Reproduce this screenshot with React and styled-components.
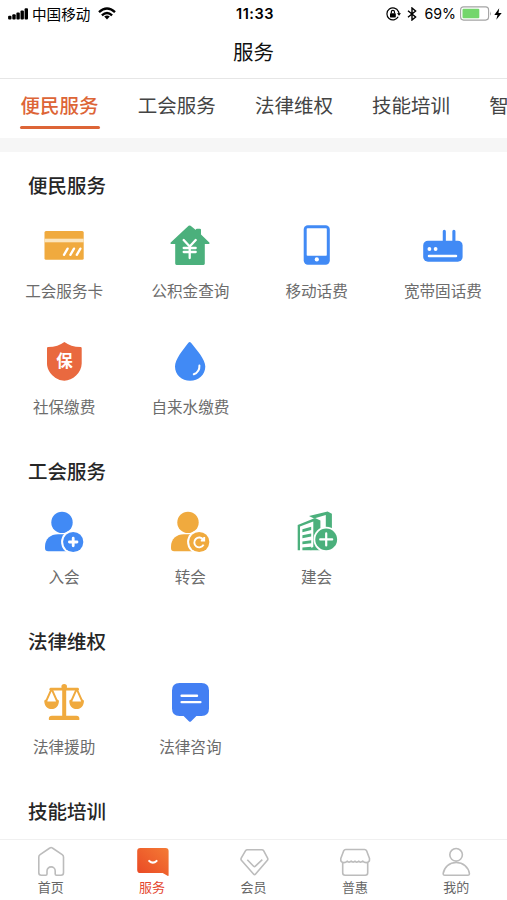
import React from "react";
import styled, { createGlobalStyle } from "styled-components";
import { JapaneseYen } from "lucide-react";

const ORANGE = "#f0aa3e";
const BLUE = "#418af5";
const GREEN = "#4bb07c";
const RED = "#e9693f";

const CardIcon = () => (
  <Icon viewBox="0 0 40 40">
    <rect x="0.5" y="6" width="39.2" height="28.7" rx="1.5" fill={ORANGE} />
    <rect x="0.5" y="13.7" width="39.2" height="3.6" fill="#fbe5bd" />
    <path
      d="M20 29.8l3.6-6.2M26.4 29.8l3.6-6.2M32.8 29.8l3.6-6.2"
      stroke="#fff"
      strokeWidth="2.3"
      strokeLinecap="round"
    />
  </Icon>
);

const HouseIcon = () => (
  <Icon viewBox="0 0 40 40">
    <path
      d="M18.6.8Q19.6 0 20.6.8L25.8 5V4.4Q26 3.7 27 3.7H29.8Q31 3.7 31 4.8V9.6L39.3 17.5Q40 18.9 38.8 18.9H34.8V38.6Q34.8 39.9 33.5 39.9H6.5Q5.2 39.9 5.2 38.6V18.9H1.2Q0 18.9.7 17.5Z"
      fill={GREEN}
    />
    <JapaneseYen x="7.7" y="12" size={24} color="#fff" strokeWidth={2.3} />
  </Icon>
);

const PhoneIcon = () => (
  <Icon viewBox="0 0 40 40">
    <rect x="6.7" y="0.3" width="26.1" height="39.5" rx="4.2" fill={BLUE} />
    <rect x="9.7" y="3.3" width="20.1" height="27.4" rx="0.8" fill="#fff" />
    <circle cx="19.8" cy="34.4" r="2.1" fill="#fff" />
  </Icon>
);

const RouterIcon = () => (
  <Icon viewBox="0 0 40 40">
    <path d="M21.3 18V6.2M30.9 18V6.2" stroke={BLUE} strokeWidth="3.1" strokeLinecap="round" />
    <rect x="0.2" y="15.7" width="39.4" height="21" rx="4.8" fill={BLUE} />
    <circle cx="6.4" cy="24" r="1.9" fill="#fff" />
    <circle cx="12.6" cy="24" r="1.9" fill="#fff" />
    <path d="M6 31H33" stroke="#fff" strokeWidth="2.5" strokeLinecap="round" />
  </Icon>
);

const ShieldIcon = () => (
  <Icon viewBox="0 0 40 40">
    <path
      d="M20.4 0.9C24.4 3.8 30 6 36.6 6.1Q37.7 6.2 37.7 7.3V22.5C37.7 31.5 28.5 39.7 20.4 39.7S3 31.5 3 22.5V7.3Q3 6.2 4.1 6.1C10.8 6 16.4 3.8 20.4 0.9Z"
      fill={RED}
    />
    <BadgeText x="20.6" y="26.4">
      保
    </BadgeText>
  </Icon>
);

const DropIcon = () => (
  <Icon viewBox="0 0 40 40">
    <path
      d="M18.4 1.7Q19.7.1 21 1.7C26.6 9 35.3 18 35.3 25.6C35.3 34 28.4 39.8 20.1 39.8S5 34 5 25.6C5 18 13 9 18.4 1.7Z"
      fill={BLUE}
    />
    <path
      d="M29.4 24.6Q29.8 30.9 23.8 33.3"
      fill="none"
      stroke="#fff"
      strokeWidth="2"
      strokeLinecap="round"
    />
  </Icon>
);

const MemberIcon = ({ color, children }) => (
  <Icon viewBox="0 0 40 40">
    <circle cx="18" cy="11.4" r="10.7" fill={color} />
    <path
      d="M1 37V35.5C1 28 6.5 23.3 14 23.3H26V40.3H4.2Q1 40.3 1 37Z"
      fill={color}
    />
    <circle cx="29.2" cy="31" r="12.1" fill="#fff" />
    <circle cx="29.2" cy="31" r="10.1" fill={color} />
    {children}
  </Icon>
);

const JoinIcon = () => (
  <MemberIcon color={BLUE}>
    <path d="M25.4 31H33M29.2 27.2V34.8" stroke="#fff" strokeWidth="2.8" strokeLinecap="round" />
  </MemberIcon>
);

const TransferIcon = () => (
  <MemberIcon color={ORANGE}>
    <path
      d="M33.2 28.6A4.9 4.9 0 1 0 33.6 33.6M34.2 26V29.5H30.8"
      fill="none"
      stroke="#fff"
      strokeWidth="1.9"
    />
  </MemberIcon>
);

const BuildingIcon = () => (
  <Icon viewBox="0 0 40 40">
    <path d="M12 5.1L30.6.5L34.9 2.8V22H28.8V3.9L17 7.5Z" fill={GREEN} />
    <path d="M.7 13.9L18 7L23.4 9.5V39.3H13.7V37L16.3 36V10.6L3 15.4V39.3H.7Z" fill={GREEN} />
    <path
      d="M5.4 18.3L14.2 15.8V18.9L5.4 21.2ZM5.4 24.3L14.2 22.5V25.6L5.4 27.2ZM5.4 30.4L14.2 29.3V32.3L5.4 33.3ZM5.4 36.4L14.2 35.8V39.3H5.4Z"
      fill={GREEN}
    />
    <circle cx="29.2" cy="28.4" r="12.7" fill="#fff" />
    <circle cx="29.2" cy="28.4" r="10.9" fill={GREEN} />
    <path
      d="M23.2 28.4H35.2M29.2 22.4V34.4"
      stroke="#fff"
      strokeWidth="2.2"
      strokeLinecap="round"
    />
  </Icon>
);

const ScalesIcon = () => (
  <Icon viewBox="0 0 40 40">
    <path d="M6.8 8.2H33.6" stroke={ORANGE} strokeWidth="2.7" strokeLinecap="round" />
    <circle cx="20.2" cy="5.8" r="2.8" fill={ORANGE} />
    <rect x="18.2" y="6" width="4" height="30" fill={ORANGE} />
    <path
      d="M7.3 8.6L1.6 21.3M7.9 8.6L13.6 21.3M32.4 8.6L26.7 21.3M33 8.6L38.7 21.3"
      stroke={ORANGE}
      strokeWidth="2"
    />
    <path d="M.3 19.4L2 18.6L3.5 20.6H11.7L13.2 18.6L14.9 19.4C15.1 24.5 12 28 7.6 28S.1 24.5.3 19.4Z" fill={ORANGE} />
    <path d="M25.3 19.4L27 18.6L28.5 20.6H36.7L38.2 18.6L39.9 19.4C40.1 24.5 37 28 32.6 28S25.1 24.5 25.3 19.4Z" fill={ORANGE} />
    <path d="M4.9 39V37.3Q4.9 34.8 7.9 34.8H32.5Q35.3 34.8 35.3 37.3V39Z" fill={ORANGE} />
  </Icon>
);

const ConsultIcon = () => (
  <Icon viewBox="0 0 40 40">
    <path
      d="M9.5 2H31.5Q39 2 39 9.5V27.6Q39 35 31.5 35H26.4L20.9 40.4Q20 41.3 19.1 40.4L13.6 35H9.5Q2 35 2 27.6V9.5Q2 2 9.5 2Z"
      fill="#437ff3"
    />
    <path
      d="M11.6 14.7H27M11.6 21.1H30.4"
      stroke="#fff"
      strokeWidth="2.4"
      strokeLinecap="round"
    />
  </Icon>
);

const HomeTabIcon = () => (
  <BarIcon viewBox="0 0 32 32">
    <path d="M14.8 2Q16.1 1 17.4 2L27.2 8.6Q28.5 9.5 28.5 11V26.7Q28.5 29.2 26 29.2H21.5Q20.2 29.2 20.2 28V25A4.1 4.1 0 0 0 12 25V28Q12 29.2 10.8 29.2H6.3Q3.8 29.2 3.8 26.7V11Q3.8 9.5 5.1 8.6Z" />
  </BarIcon>
);

const ServiceTabIcon = () => (
  <BarIcon viewBox="0 0 32 32">
    <defs>
      <linearGradient id="service" x1="1" y1="0" x2="0" y2="1">
        <stop offset="0" stopColor="#f47b35" />
        <stop offset="1" stopColor="#e94724" />
      </linearGradient>
    </defs>
    <path
      d="M4.3 2H29.5Q32.6 2 32.6 5.1V29.3Q32.6 30.4 31.5 29.8L26.7 27H4.3Q1.2 27 1.2 23.9V5.1Q1.2 2 4.3 2Z"
      fill="url(#service)"
      stroke="none"
    />
    <path d="M13.2 14.9Q16.9 18.3 20.6 14.9" stroke="#fff" strokeWidth="2" strokeLinecap="round" />
  </BarIcon>
);

const VipTabIcon = () => (
  <BarIcon viewBox="0 0 32 32">
    <path d="M9.3 3.7H23.9Q25 3.7 25.6 4.7L29.6 12.2Q30.2 13.5 29.2 14.5L17.6 28Q16.6 29.2 15.5 28L3.6 14.5Q2.6 13.5 3.2 12.2L7.6 4.7Q8.2 3.7 9.3 3.7Z" />
    <path d="M9.3 13.7L15.6 20.2Q16.5 21.1 17.4 20.2L24.3 13.7" />
  </BarIcon>
);

const StoreTabIcon = () => (
  <BarIcon viewBox="0 0 32 32">
    <path d="M6.7 3.5H25.6Q27 3.5 27.6 4.8L30.5 12.5Q30.9 16.5 27.3 16.6Q25.2 16.6 23.7 15.2Q21.7 17 19.9 15.2Q17.9 17 16.1 15.2Q14.1 17 12.2 15.2Q10.2 17 8.4 15.2Q6.8 16.6 4.8 16.6Q1.3 16.5 1.8 12.5L4.7 4.8Q5.3 3.5 6.7 3.5Z" />
    <path d="M3.7 16.4V26.8Q3.7 29.2 6.1 29.2H26.3Q28.7 29.2 28.7 26.8V16.4" />
  </BarIcon>
);

const MineTabIcon = () => (
  <BarIcon viewBox="0 0 32 32">
    <circle cx="16.1" cy="8.8" r="6.3" />
    <path d="M3.2 27.4C4.2 21 9.3 16.5 16.2 16.5S28.4 21 29.4 27.4Q29.6 29.2 27.8 29.2H4.8Q3 29.2 3.2 27.4Z" />
  </BarIcon>
);

const tabs = ["便民服务", "工会服务", "法律维权", "技能培训", "智"];

const sections = [
  {
    title: "便民服务",
    items: [
      { label: "工会服务卡", icon: CardIcon },
      { label: "公积金查询", icon: HouseIcon },
      { label: "移动话费", icon: PhoneIcon },
      { label: "宽带固话费", icon: RouterIcon },
      { label: "社保缴费", icon: ShieldIcon },
      { label: "自来水缴费", icon: DropIcon },
    ],
  },
  {
    title: "工会服务",
    items: [
      { label: "入会", icon: JoinIcon },
      { label: "转会", icon: TransferIcon },
      { label: "建会", icon: BuildingIcon },
    ],
  },
  {
    title: "法律维权",
    items: [
      { label: "法律援助", icon: ScalesIcon },
      { label: "法律咨询", icon: ConsultIcon },
    ],
  },
  { title: "技能培训", items: [] },
];

const barItems = [
  { label: "首页", icon: HomeTabIcon },
  { label: "服务", icon: ServiceTabIcon },
  { label: "会员", icon: VipTabIcon },
  { label: "普惠", icon: StoreTabIcon },
  { label: "我的", icon: MineTabIcon },
];

const StatusBar = () => (
  <Status>
    <StatusSide>
      <svg width="21" height="12" viewBox="0 0 21 12">
        <rect x="0.1" y="7.8" width="3.4" height="3.7" rx="1" />
        <rect x="4.3" y="6.3" width="3.4" height="5.2" rx="1" />
        <rect x="8.4" y="4.5" width="3.4" height="7" rx="1" />
        <rect x="12.5" y="2.4" width="3.4" height="9.1" rx="1" />
        <rect x="16.6" y="0.2" width="3.4" height="11.3" rx="1" />
      </svg>
      <Carrier>中国移动</Carrier>
      <svg width="18" height="13" viewBox="0 0 18 13" fill="none" stroke="#000" strokeWidth="2.4">
        <path d="M1 5.2Q9-2 17 5.2M3.9 8.3Q9 3.7 14.1 8.3" />
        <path d="M9 12.4L6.2 9.6Q9 7.4 11.8 9.6Z" fill="#000" stroke="none" />
      </svg>
    </StatusSide>
    <Time>11:33</Time>
    <StatusSide $end>
      <svg width="15" height="14" viewBox="0 0 15 14" fill="none" stroke="#000" strokeWidth="1.2">
        <path d="M12.4 4.4A6 6 0 1 0 12.2 9.8M12.4 4.4Q13 5.5 13 7" />
        <path d="M11 6.2H15L13 8.8Z" fill="#000" stroke="none" />
        <rect x="4" y="6.2" width="5.8" height="4.2" rx="0.6" fill="#000" stroke="none" />
        <path d="M5.3 6.4V5A1.6 1.6 0 0 1 8.5 5V6.4" />
      </svg>
      <Bluetooth width="10" height="14" viewBox="0 0 10 14" fill="none" stroke="#000" strokeWidth="1.4">
        <path d="M1 3.8L8.6 10L5 13V1L8.6 4L1 10.2" />
      </Bluetooth>
      <Percent>69%</Percent>
      <svg width="32" height="15" viewBox="0 0 32 15">
        <rect x="0.6" y="0.9" width="28" height="13.2" rx="3" fill="#fff" stroke="#a4a4a4" strokeWidth="1.1" />
        <rect x="2.5" y="2.8" width="16.8" height="9.4" rx="1" fill="#74d66c" />
        <path d="M30 5.2Q31.8 7.5 30 9.8Z" fill="#a4a4a4" />
      </svg>
      <Bolt width="8" height="12" viewBox="0 0 8 12">
        <path d="M5.2.3L.3 7H3.5L2.3 11.8L7.7 5H4.5Z" />
      </Bolt>
    </StatusSide>
  </Status>
);

const App = () => {
  return (
    <>
      <GlobalStyle />
      <Page>
        <StatusBar />
        <Header>服务</Header>
        <Tabs>
          {tabs.map((tab, i) => (
            <Tab key={tab} $active={i === 0}>
              {tab}
            </Tab>
          ))}
        </Tabs>
        <Content>
          {sections.map((section) => (
            <Section key={section.title}>
              <SectionTitle>{section.title}</SectionTitle>
              <Grid>
                {section.items.map(({ label, icon: ItemIcon }) => (
                  <Cell key={label}>
                    <ItemIcon />
                    <span>{label}</span>
                  </Cell>
                ))}
              </Grid>
            </Section>
          ))}
        </Content>
        <BottomBar>
          {barItems.map(({ label, icon: ItemIcon }) => (
            <BarItem key={label} $active={label === "服务"}>
              <ItemIcon />
              <span>{label}</span>
            </BarItem>
          ))}
        </BottomBar>
      </Page>
    </>
  );
};

const GlobalStyle = createGlobalStyle`
  * {
    box-sizing: border-box;
  }
  body {
    margin: 0;
    background: #fff;
    font-family: "Noto Sans CJK SC", sans-serif;
    overflow: hidden;
  }
`;

const Page = styled.div`
  width: 507px;
  height: 900px;
  display: flex;
  flex-direction: column;
  overflow: hidden;
  background: #fff;
`;

const Status = styled.div`
  height: 27px;
  flex: none;
  display: grid;
  grid-template-columns: 1fr auto 1fr;
  align-items: center;
  padding: 0 5px 0 8px;
  color: #000;
`;

const StatusSide = styled.div`
  display: flex;
  align-items: center;
  justify-content: ${(props) => (props.$end ? "flex-end" : "flex-start")};
`;

const Carrier = styled.span`
  font-size: 14.6px;
  line-height: 20px;
  margin: 0 8px 0 3px;
`;

const Time = styled.span`
  font-family: Inter, sans-serif;
  font-size: 14.5px;
  font-weight: 600;
  letter-spacing: 0.5px;
`;

const Bluetooth = styled.svg`
  margin: 0 7px 0 6px;
`;

const Percent = styled.span`
  font-family: Inter, sans-serif;
  font-size: 14.2px;
  margin-right: 4px;
`;

const Bolt = styled.svg`
  margin-left: 2px;
`;

const Header = styled.div`
  height: 52px;
  flex: none;
  border-bottom: 1px solid #e6e6e6;
  text-align: center;
  font-size: 20.5px;
  line-height: 49px;
  color: #111;
`;

const Tabs = styled.div`
  height: 59px;
  flex: none;
  display: flex;
  gap: 37.2px;
  padding-left: 19.5px;
  overflow: hidden;
`;

const Tab = styled.div`
  flex: none;
  width: 80px;
  height: 50px;
  padding-left: 1px;
  white-space: nowrap;
  font-size: 19.5px;
  line-height: 51px;
  color: ${(props) => (props.$active ? "#dd6537" : "#444")};
  font-weight: ${(props) => (props.$active ? 500 : 400)};
  &::after {
    content: "";
    display: ${(props) => (props.$active ? "block" : "none")};
    height: 3.4px;
    margin: -4.4px 0 0 -1px;
    border-radius: 2px;
    background: #dd6537;
  }
`;

const Content = styled.div`
  flex: 1;
  min-height: 0;
  overflow: hidden;
  border-top: 14px solid #f6f6f6;
`;

const Section = styled.div`
  padding: 19px 0 6px;
`;

const SectionTitle = styled.div`
  padding-left: 28px;
  margin-bottom: 1px;
  font-size: 19.5px;
  font-weight: 500;
  line-height: 28px;
  color: #262626;
`;

const Grid = styled.div`
  display: grid;
  grid-template-columns: repeat(4, 1fr);
  padding-right: 1px;
  padding-left: 1px;
`;

const Cell = styled.div`
  height: 116px;
  padding-top: 25px;
  display: flex;
  flex-direction: column;
  align-items: center;
  span {
    margin-top: 14px;
    font-size: 15.6px;
    line-height: 22px;
    color: #6c6c6c;
  }
`;

const Icon = styled.svg`
  width: 40px;
  height: 40px;
  flex: none;
  overflow: visible;
`;

const BadgeText = styled.text`
  font-size: 16.5px;
  font-weight: 700;
  fill: #fff;
  text-anchor: middle;
`;

const BottomBar = styled.div`
  height: 61px;
  flex: none;
  display: flex;
  border-top: 1px solid #f0f0f0;
`;

const BarItem = styled.div`
  flex: 1;
  padding-top: 6px;
  display: flex;
  flex-direction: column;
  align-items: center;
  span {
    margin-top: -0.5px;
    font-size: 13px;
    line-height: 18px;
    color: ${(props) => (props.$active ? "#e5472f" : "#666")};
  }
`;

const BarIcon = styled.svg`
  width: 32px;
  height: 32px;
  flex: none;
  overflow: visible;
  fill: none;
  stroke: #bcbcbc;
  stroke-width: 1.6px;
  stroke-linejoin: round;
`;

export default App;
